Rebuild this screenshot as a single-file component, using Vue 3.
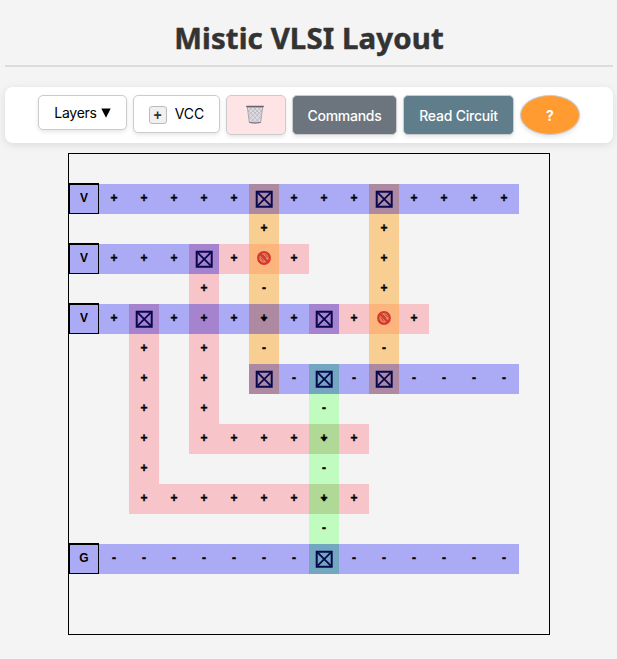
<script setup>
const layers = { b: 'metal', p: 'poly', o: 'ndiff', g: 'pdiff', m: 'metal-poly', u: 'metal-ndiff', r: 'ndiff-poly', t: 'metal-pdiff', l: 'pdiff-poly' }

// One pair of strings per row: the layer of each cell, and the mark drawn in it.
const rows = [
  ['', ''],
  ['bbbbbbubbbubbbb', 'V+++++X+++X++++'],
  ['      o   o', '      +   +'],
  ['bbbbmprp  o', 'V+++X+N+  +'],
  ['    p o   o', '    + -   +'],
  ['bbmbmbubmprp', 'V+X+++*+X+N+'],
  ['  p p o   o', '  + + -   -'],
  ['  p p ubtbubbbb', '  + + X-X-X----'],
  ['  p p   g', '  + +   -'],
  ['  p pppplp', '  + ++++*+'],
  ['  p     g', '  +     -'],
  ['  pppppplp', '  ++++++*+'],
  ['        g', '        -'],
  ['bbbbbbbbtbbbbbb', 'G-------X------'],
  ['', ''],
  ['', ''],
]
const cells = rows.flatMap(([l, m], y) =>
  Array.from({ length: 16 }, (_, x) => ({ key: `${y}-${x}`, layer: layers[l[x]] || '', mark: (m[x] || '').trim() })))
</script>

<template>
  <main class="page">
    <h1>Mistic VLSI Layout</h1>
    <nav class="toolbar">
      <button class="layers">Layers <svg class="caret" viewBox="0 0 10 10"><path d="M0.3 0.5H9.7L5 9.7Z" /></svg></button>
      <button class="vcc"><span class="key">+</span>VCC</button>
      <button class="trash" aria-label="Clear">
        <svg viewBox="0 0 18 19">
          <path d="M1.3 1.8L3.3 17.4Q9 18.8 14.7 17.4L16.7 1.8Z" fill="#dedae2" stroke="#9c969b" stroke-width=".8" />
          <path d="M2 5L13 17M3 2L15 14M7 2L16 11M12 2L16 7M3 11L9 17.5M16 5L5 17M15 2L3 14M11 2L2 11M6 2L2 7M15 11L9 17.5" stroke="#b0aab2" stroke-width=".6" fill="none" />
          <path d="M.8 1.4H17.2" stroke="#676168" stroke-width="1.5" stroke-linecap="round" />
          <path d="M3.4 17.5Q9 18.5 14.6 17.5" stroke="#777078" stroke-width="1" fill="none" />
        </svg>
      </button>
      <button class="commands">Commands</button>
      <button class="read">Read Circuit</button>
      <button class="help">?</button>
    </nav>
    <section class="board">
      <div v-for="c in cells" :key="c.key" class="cell" :class="[c.layer, { terminal: c.mark === 'V' || c.mark === 'G' }]">
        <svg v-if="c.mark === 'X'" class="contact" viewBox="0 0 18 18">
          <path d="M1.7 1.7H16.7V16.7H1.7Z" stroke-width="2" />
          <path d="M2.7 2.7L15.7 15.7M15.7 2.7L2.7 15.7" stroke-width="1.8" />
        </svg>
        <svg v-else-if="c.mark === 'N'" class="blocked" viewBox="0 0 14 14">
          <circle cx="7" cy="7" r="5.8" fill="#e88563" stroke="#d8382c" stroke-width="2.3" />
          <path d="M5.5 3.5L9 7M8 3.3L10.5 6M3.8 6.5L6.5 10" stroke="#a8452f" stroke-width="1" />
          <path d="M2.8 2.8L11.2 11.2" stroke="#d8382c" stroke-width="2.2" />
        </svg>
        <span v-else-if="c.mark === '*'" class="stack"><span>+</span><span class="under">-</span></span>
        <span v-else :class="{ sign: c.mark === '+' || c.mark === '-' }">{{ c.mark }}</span>
      </div>
    </section>
  </main>
</template>

<style>
body { background: #f4f4f4; }
</style>

<style scoped>
* { box-sizing: border-box; }
.page {
  width: 617px;
  height: 659px;
  padding: 20px 4px 0 5px;
  overflow: hidden;
  background: #f4f4f4;
  font-family: Inter, sans-serif;
}
h1 {
  height: 47px;
  margin: 0 0 20px;
  border-bottom: 2px solid #dcdcdc;
  color: #333;
  font: bold 29.4px/37px "Noto Sans", sans-serif;
  letter-spacing: 0.12px;
  -webkit-text-stroke: 0.5px #333;
  text-align: center;
}
.toolbar {
  display: flex;
  align-items: flex-start;
  justify-content: center;
  gap: 6px;
  height: 56px;
  padding-top: 8px;
  border-radius: 8px;
  background: #fff;
  box-shadow: 0 2px 8px rgba(0, 0, 0, 0.1);
}
button {
  display: flex;
  align-items: center;
  justify-content: center;
  height: 40px;
  padding: 0;
  border: 1px solid #ccc;
  border-radius: 5px;
  background: #fff;
  box-shadow: 0 2px 4px rgba(0, 0, 0, 0.1);
  color: #000;
  font: 14px Inter, sans-serif;
}
.layers { width: 89px; height: 35px; gap: 4px; letter-spacing: -0.25px; }
.caret { width: 10px; height: 10px; }
.vcc { width: 87px; height: 38px; padding-bottom: 2px; gap: 8px; }
.key {
  width: 18px;
  height: 18px;
  margin-top: 3px;
  border: 1px solid #bbb;
  border-radius: 3px;
  background: #f0f0f0;
  color: #333;
  font: bold 14px/17px "Liberation Sans", sans-serif;
}
.trash { width: 60px; background: #ffe4e6; }
.trash svg { width: 18px; height: 19px; margin: 0 2px 2px 0; }
.commands { width: 105px; background: #6c757d; color: #fff; font-weight: 500; letter-spacing: -0.28px; }
.read { width: 111px; background: #607d8b; color: #fff; font-weight: 500; letter-spacing: -0.22px; }
.help { width: 60px; border-radius: 50%; background: #ff9b30; color: #fff; font-weight: bold; }
.board {
  display: grid;
  grid-template: repeat(16, 30px) / repeat(16, 30px);
  width: 482px;
  margin: 10px 0 0 63px;
  border: 1px solid #000;
}
.cell {
  display: flex;
  align-items: center;
  justify-content: center;
  padding-bottom: 2px;
  color: #000;
  font: bold 12px/14px "Liberation Sans", sans-serif;
}
.sign, .stack { -webkit-text-stroke: 0.4px #000; }
.terminal { border: 1px solid #000; box-shadow: 0 -1px #000; }
.metal { background: #aaaaf5; }
.poly { background: #f6c4c9; }
.ndiff { background: #f9ce93; }
.pdiff { background: #c0fbc0; }
.metal-poly { background: #a683cf; }
.metal-ndiff { background: #ad8aa2; }
.ndiff-poly { background: #fcb57d; }
.metal-pdiff { background: #73a7c0; }
.pdiff-poly { background: #b0d896; }
.contact {
  width: 18px;
  height: 18px;
  margin-top: 2px;
  fill: none;
  stroke: #07074f;
}
.blocked { width: 14px; height: 14px; }
.stack { display: grid; justify-items: center; }
.stack span { grid-area: 1 / 1; }
.stack .under { padding-top: 1px; }
</style>
